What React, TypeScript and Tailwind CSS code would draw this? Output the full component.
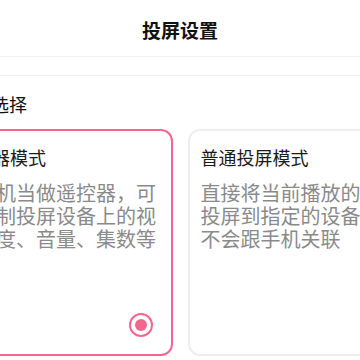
import React, { useState } from 'react'

type Mode = {
  id: string
  title: string
  desc: string
}

const modes: Mode[] = [
  { id: 'remote', title: '遥控器模式', desc: '将手机当做遥控器，可以控制投屏设备上的视频进度、音量、集数等' },
  { id: 'normal', title: '普通投屏模式', desc: '直接将当前播放的视频投屏到指定的设备上，不会跟手机关联' },
]

const font = { fontFamily: '"Noto Sans CJK SC", "Noto Sans", sans-serif' }

export default function App() {
  const [selected, setSelected] = useState('remote')

  return (
    <div className="w-[360px] h-[360px] overflow-hidden bg-white" style={font}>
      {/* Header */}
      <div className="h-[57px] flex items-center justify-center border-b border-[#efefef]">
        <h1 className="text-[19px] font-bold text-[#111] pt-1">投屏设置</h1>
      </div>

      <div className="mt-[18px] border-t border-[#f0f0f0] flex justify-center">
        <div className="w-[474px] shrink-0">
          <p className="pl-[12px] pt-[15px] text-[18px] leading-[26px] text-[#111]">模式选择</p>

          {/* Mode cards */}
          <div className="mt-[12px] grid grid-cols-2 gap-[15px]">
            {modes.map((m) => {
              const active = selected === m.id
              return (
                <button
                  key={m.id}
                  onClick={() => setSelected(m.id)}
                  className={
                    active
                      ? 'h-[227px] rounded-[12px] border-2 border-[#f5668f] px-[11px] pt-[14px] pb-[17px] flex flex-col text-left'
                      : 'h-[227px] rounded-[12px] border-2 border-[#eceef4] px-[11px] pt-[14px] pb-[17px] flex flex-col text-left'
                  }
                >
                  <span className="text-[18px] leading-[24px] text-[#1a1a1a]">{m.title}</span>
                  <span className="mt-[12px] text-[20px] leading-[23px] text-[#8a8a8a]">{m.desc}</span>
                  {active && (
                    <span className="mt-auto self-end mr-[7px] w-[24px] h-[24px] rounded-full border-[2.5px] border-[#f5668f] flex items-center justify-center">
                      <span className="w-[12px] h-[12px] rounded-full bg-[#f5668f]" />
                    </span>
                  )}
                </button>
              )
            })}
          </div>
        </div>
      </div>
    </div>
  )
}
